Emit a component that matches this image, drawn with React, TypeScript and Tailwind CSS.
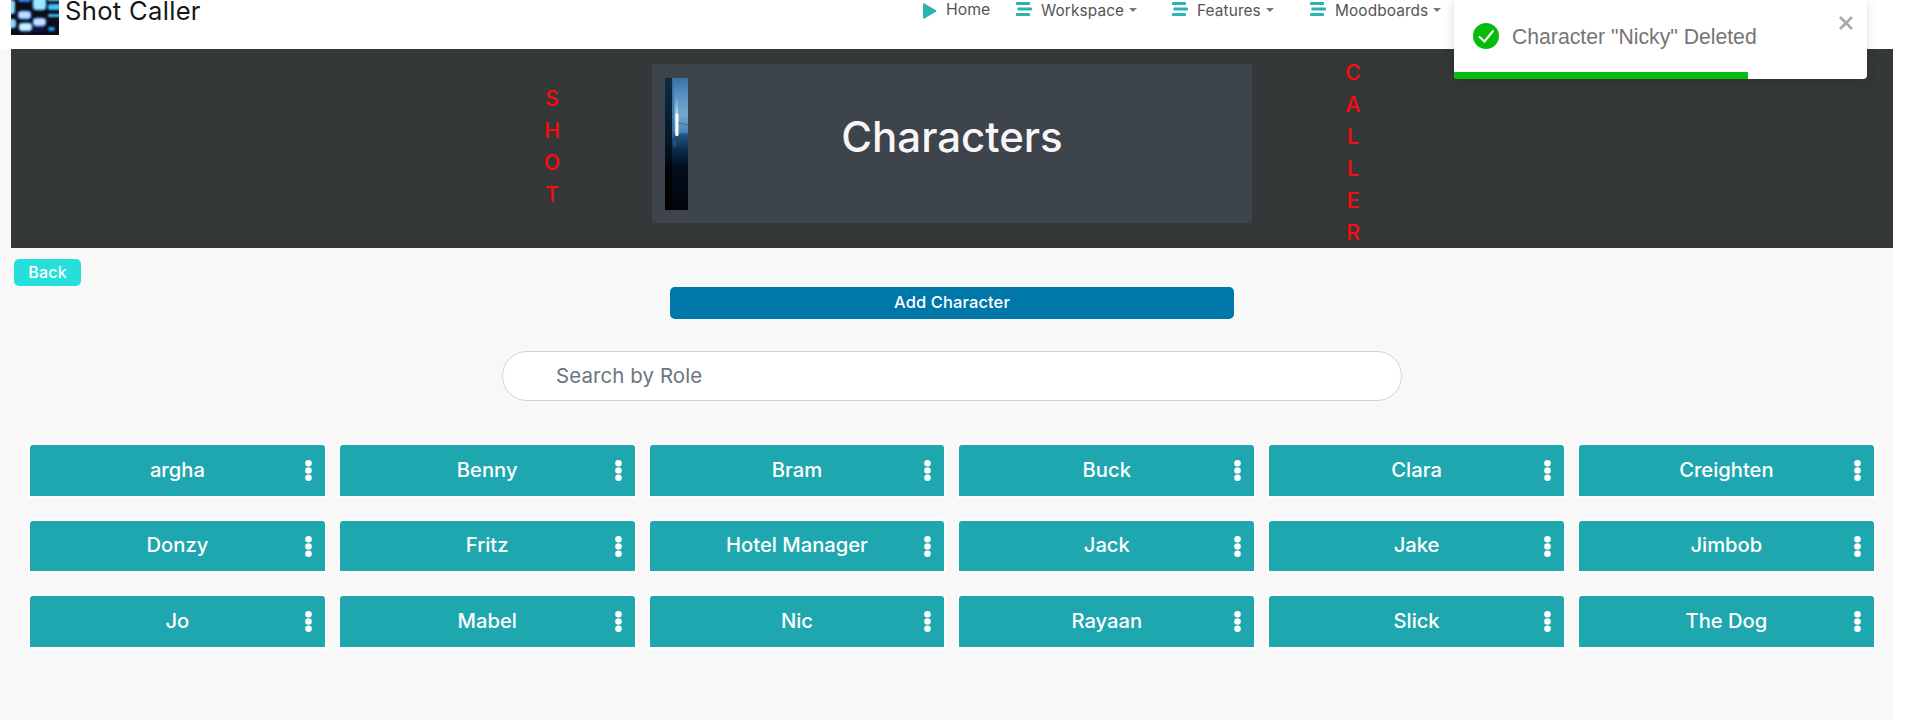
import React from "react";

const names = ["argha", "Benny", "Bram", "Buck", "Clara", "Creighten", "Donzy", "Fritz", "Hotel Manager", "Jack", "Jake", "Jimbob", "Jo", "Mabel", "Nic", "Rayaan", "Slick", "The Dog"];

function Bars() {
  return (
    <svg className="h-[14px] w-[16px] shrink-0" viewBox="0 0 16 14" fill="#2ab3b1">
      <rect x="0" y="0" width="14" height="3" rx="0.8" />
      <rect x="1.5" y="5.5" width="14.5" height="3" rx="0.8" />
      <rect x="0" y="11" width="14" height="3" rx="0.8" />
    </svg>
  );
}

function MenuItem({ label, className }: { label: string; className: string }) {
  return (
    <div className={"flex items-start pt-[2px] " + className}>
      <Bars />
      <span className="ml-[9px] text-[15.4px] leading-[18px] tracking-[0.1px] whitespace-nowrap text-[#555]">{label}</span>
      <svg className="mt-[6px] ml-[5px] h-[4px] w-[8px]" viewBox="0 0 8 4" fill="#777"><path d="M0 0h8L4 4z" /></svg>
    </div>
  );
}

function Logo() {
  return (
    <svg className="h-[35px] w-[48px]" viewBox="0 0 48 35">
      <defs><filter id="soft"><feGaussianBlur stdDeviation="0.8" /></filter></defs>
      <rect width="48" height="35" fill="#0b0d18" />
      <g filter="url(#soft)">
        <rect x="-4" y="0" width="8" height="14" rx="3" fill="#8fdcff" />
        <rect x="-4" y="19" width="9" height="9" rx="3" fill="#8fd8ff" />
        <rect x="7" y="-4" width="13" height="6" rx="3" fill="#2f86ff" />
        <rect x="7" y="11" width="13" height="8" rx="3" fill="#b9deff" stroke="#1767e8" />
        <rect x="8" y="23" width="13" height="8" rx="3" fill="#d0f2ff" stroke="#2387f0" />
        <rect x="22" y="-3" width="13" height="13" rx="3" fill="#9beaff" stroke="#1787ef" />
        <rect x="22" y="18" width="13" height="8" rx="3" fill="#c6e4ff" stroke="#1550dd" />
        <rect x="23" y="27" width="10" height="5" fill="#070750" />
        <rect x="37" y="-3" width="14" height="4" rx="1" fill="#62cfff" />
        <rect x="37" y="4" width="14" height="6" rx="2" fill="#45c0ff" />
        <rect x="37" y="14" width="14" height="3" rx="1" fill="#45c0ff" />
        <rect x="37" y="27" width="7" height="4" rx="2" fill="#1c9cff" />
      </g>
    </svg>
  );
}

function Picture() {
  return (
    <svg className="h-[132px] w-[23px]" viewBox="0 0 23 132">
      <defs>
        <linearGradient id="sky" x1="0" y1="0" x2="0" y2="1">
          <stop offset="0" stopColor="#3c709f" /><stop offset=".12" stopColor="#568fc1" /><stop offset=".28" stopColor="#74a9cd" />
          <stop offset=".41" stopColor="#4b82b1" /><stop offset=".43" stopColor="#21547f" /><stop offset=".54" stopColor="#0b2e4e" />
          <stop offset=".67" stopColor="#031020" /><stop offset="1" stopColor="#01040a" />
        </linearGradient>
        <linearGradient id="wall" x1="0" y1="0" x2="0" y2="1">
          <stop offset="0" stopColor="#0b2b47" /><stop offset=".5" stopColor="#041625" /><stop offset=".7" stopColor="#000205" /><stop offset="1" stopColor="#000" />
        </linearGradient>
        <linearGradient id="beam" x1="0" y1="0" x2="0" y2="1">
          <stop offset="0" stopColor="#a9cce5" stopOpacity="0" /><stop offset=".5" stopColor="#cfe3f0" /><stop offset="1" stopColor="#fff" />
        </linearGradient>
        <filter id="glow"><feGaussianBlur stdDeviation="0.5" /></filter>
      </defs>
      <rect width="23" height="132" fill="url(#sky)" />
      <rect width="7" height="132" fill="url(#wall)" />
      <rect x="7" y="0" width="2" height="60" fill="#2e6da4" opacity=".7" />
      <rect x="10.5" y="18" width="2.6" height="40" fill="url(#beam)" filter="url(#glow)" />
      <rect x="10.5" y="36" width="3" height="21" fill="#fff" filter="url(#glow)" />
      <path d="M13 45l10 2" stroke="#2f6290" strokeWidth=".7" />
      <rect x="8" y="62" width="3" height="7" fill="#315f87" opacity=".6" />
    </svg>
  );
}

function Letters({ word, className }: { word: string; className: string }) {
  return (
    <div className={"flex w-[20px] flex-col items-center text-[21px] leading-[32px] font-medium text-[#ff0a0e] " + className}>
      {word.split("").map((c, i) => <span key={i}>{c}</span>)}
    </div>
  );
}

export default function App() {
  return (
    <div className="relative h-[720px] w-full overflow-hidden bg-white font-['Inter',sans-serif]">
      <header className="flex h-[49px] items-start pl-[11px]">
        <Logo />
        <span className="ml-[6px] w-[141px] text-[25.6px] leading-[22px] tracking-[0.3px] whitespace-nowrap text-[#151719]">Shot Caller</span>
        <nav className="ml-[717px] flex items-start">
          <div className="flex w-[93px] items-start">
            <svg className="mt-[3px] h-[16px] w-[14px]" viewBox="0 0 14 16" fill="#2ab3b1"><path d="M0 1Q0 0 1 .2L13 7.2Q14 8 13 8.8L1 15.8Q0 16 0 15z" /></svg>
            <span className="ml-[9px] text-[15.8px] leading-[20px] text-[#555]">Home</span>
          </div>
          <MenuItem label="Workspace" className="w-[156px]" />
          <MenuItem label="Features" className="w-[138px]" />
          <MenuItem label="Moodboards" className="" />
        </nav>
      </header>

      <div className="mr-[12px] h-[671px] bg-[#f8f8f8]">
        <section className="ml-[11px] flex h-[199px] items-start bg-[#343838]">
          <Letters word="SHOT" className="mt-[34px] ml-[531px]" />
          <div className="mt-[15px] ml-[90px] flex h-[159px] w-[600px] items-start bg-[#3d444b] pt-[14px] pl-[13px]">
            <Picture />
            <h1 className="ml-[153px] w-[222px] text-center text-[42px] leading-[118px] font-medium whitespace-nowrap text-[#f7f5f6]">Characters</h1>
          </div>
          <Letters word="CALLER" className="mt-[8px] ml-[91px]" />
        </section>

        <div className="flex h-[39px] items-start pt-[11px] pl-[14px]">
          <button className="h-[27px] w-[67px] rounded-[5px] bg-[#25e0da] text-[16px] leading-[27px] font-medium tracking-[0.2px] text-white">Back</button>
        </div>
        <button className="ml-[670px] block h-[32px] w-[564px] rounded-[5px] bg-[#0077a9] pb-[2px] text-[16.5px] leading-[30px] font-medium tracking-[0.1px] text-white">Add Character</button>
        <div className="mt-[32px] ml-[502px] flex h-[50px] w-[900px] items-center rounded-[25px] border border-[#ced4da] bg-white pl-[53px] text-[20.4px] tracking-[0.12px] text-[#6c757d]">Search by Role</div>

        <main className="mt-[44.2px] ml-[30px] grid w-[1843.8px] grid-cols-6 gap-x-[15px] gap-y-[24.8px]">
          {names.map((n) => (
            <div key={n} className="relative flex h-[50.6px] items-center justify-center rounded-t-[3px] bg-[#1fa7b0] pb-px text-[20.2px] font-medium text-white shadow-[0_0_0_2px_white]">
              <span>{n}</span>
              <svg className="absolute top-[15px] right-[13px] h-[21px] w-[7px]" viewBox="0 0 7 21" fill="white"><circle cx="3.5" cy="3.3" r="3.3" /><circle cx="3.5" cy="10.5" r="3.3" /><circle cx="3.5" cy="17.7" r="3.3" /></svg>
            </div>
          ))}
        </main>
      </div>

      <div className="absolute top-0 left-[1454px] h-[79px] w-[413px] overflow-hidden rounded-b-[4px] bg-white shadow-[0_1px_10px_rgba(0,0,0,0.1),0_2px_15px_rgba(0,0,0,0.05)]">
        <div className="flex items-start pt-[23px] pl-[19px]">
          <svg className="h-[26px] w-[26px]" viewBox="0 0 26 26"><circle cx="13" cy="13" r="13" fill="#07bc0c" /><path d="M6.5 14l5 4.5L20 8" fill="none" stroke="#fff" strokeWidth="2" strokeLinecap="round" /></svg>
          <span className="ml-[13px] w-[245px] font-['Liberation_Sans',sans-serif] text-[21.2px] leading-[28px] whitespace-nowrap text-[#757575]">Character "Nicky" Deleted</span>
          <svg className="mt-[-7px] ml-[82px] h-[14px] w-[14px]" viewBox="0 0 14 14" stroke="#aaa" strokeWidth="2.7"><path d="M1 1l12 12M13 1L1 13" /></svg>
        </div>
        <div className="absolute bottom-0 left-0 h-[7px] w-[294px] bg-[#07bc0c]" />
      </div>
    </div>
  );
}
